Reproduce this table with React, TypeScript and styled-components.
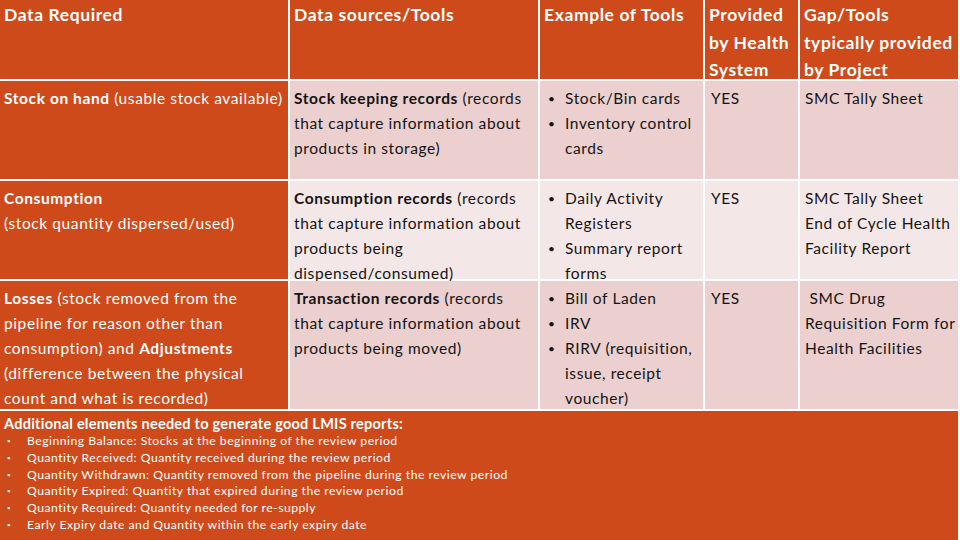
import React from "react";
import styled, { createGlobalStyle } from "styled-components";

const Global = createGlobalStyle`
  html, body { margin: 0; padding: 0; background: #ffffff; }
  body { font-family: Lato, "Open Sans", "Liberation Sans", sans-serif; }
  #root { width: 960px; height: 540px; overflow: hidden; }
`;

const ORANGE = "#CF4A1A";

const Page = styled.div`
  width: 958px;
  display: flex;
  flex-direction: column;
  gap: 2px;
`;

const Table = styled.div`
  display: grid;
  grid-template-columns: 288px 248px 163px 93px 158px;
  grid-template-rows: 79px 98px 98px 128px;
  column-gap: 2px;
  row-gap: 2px;
`;

const HeadCell = styled.div`
  background: ${ORANGE};
  color: #ffffff;
  font-weight: 700;
  font-size: 17.5px;
  letter-spacing: 0.6px;
  line-height: 27.5px;
  padding: 1px 0 0 4px;
`;

type Tone = "a" | "b";

const LabelCell = styled.div`
  background: ${ORANGE};
  color: #ffffff;
  font-size: 15.5px;
  letter-spacing: 0.6px;
  line-height: 25px;
  padding: 5px 2px 0 4px;
  b { font-weight: 700; }
`;

const BodyCell = styled.div<{ $tone: Tone; $pad?: string }>`
  background: ${(p) => (p.$tone === "a" ? "#EBD0CF" : "#F4E7E7")};
  color: #141414;
  font-size: 15.5px;
  letter-spacing: 0.6px;
  line-height: 25px;
  padding: ${(p) => p.$pad ?? "5px 2px 0 4px"};
  b { font-weight: 700; }
`;

const BulletList = styled.ul`
  list-style: none;
  margin: 0;
  padding: 0;
`;

const BulletItem = styled.li`
  position: relative;
  padding-left: 17px;
  &::before {
    content: "•";
    position: absolute;
    left: 0;
    top: 0;
    font-size: 12px;
  }
`;

const Footer = styled.div`
  background: ${ORANGE};
  color: #ffffff;
  height: 129px;
  padding: 3px 5px 0 4px;
  box-sizing: border-box;
`;

const FooterTitle = styled.div`
  font-weight: 700;
  font-size: 14.5px;
  letter-spacing: 0.25px;
  line-height: 19px;
`;

const FooterList = styled.ul`
  list-style: none;
  margin: 0;
  padding: 0;
`;

const FooterItem = styled.li`
  position: relative;
  font-size: 12.2px;
  letter-spacing: 0.5px;
  line-height: 16.8px;
  padding-left: 23px;
  &::before {
    content: "▪";
    position: absolute;
    left: 3px;
    top: 0;
    font-size: 8px;
  }
`;

const Bullets: React.FC<{ items: string[] }> = ({ items }) => (
  <BulletList>
    {items.map((t) => (
      <BulletItem key={t}>{t}</BulletItem>
    ))}
  </BulletList>
);

export default function App() {
  return (
    <>
      <Global />
      <Page>
        <Table>
          <HeadCell>Data Required</HeadCell>
          <HeadCell>Data sources/Tools</HeadCell>
          <HeadCell>Example of Tools</HeadCell>
          <HeadCell>Provided by Health System</HeadCell>
          <HeadCell>Gap/Tools typically provided by Project</HeadCell>

          <LabelCell>
            <b>Stock on hand</b> (usable stock available)
          </LabelCell>
          <BodyCell $tone="a">
            <b>Stock keeping records</b> (records that capture information about products in storage)
          </BodyCell>
          <BodyCell $tone="a" $pad="5px 2px 0 8px">
            <Bullets items={["Stock/Bin cards", "Inventory control cards"]} />
          </BodyCell>
          <BodyCell $tone="a" $pad="5px 2px 0 6px">YES</BodyCell>
          <BodyCell $tone="a" $pad="5px 0 0 5px">SMC Tally Sheet</BodyCell>

          <LabelCell>
            <b>Consumption</b>
            <br />
            (stock quantity dispersed/used)
          </LabelCell>
          <BodyCell $tone="b">
            <b>Consumption records</b> (records that capture information about products being dispensed/consumed)
          </BodyCell>
          <BodyCell $tone="b" $pad="5px 2px 0 8px">
            <Bullets items={["Daily Activity Registers", "Summary report forms"]} />
          </BodyCell>
          <BodyCell $tone="b" $pad="5px 2px 0 6px">YES</BodyCell>
          <BodyCell $tone="b" $pad="5px 0 0 5px">
            SMC Tally Sheet
            <br />
            End of Cycle Health Facility Report
          </BodyCell>

          <LabelCell>
            <b>Losses</b> (stock removed from the pipeline for reason other than consumption) and{" "}
            <b>Adjustments</b> (difference between the physical count and what is recorded)
          </LabelCell>
          <BodyCell $tone="a">
            <b>Transaction records</b> (records that capture information about products being moved)
          </BodyCell>
          <BodyCell $tone="a" $pad="5px 2px 0 8px">
            <Bullets items={["Bill of Laden", "IRV", "RIRV (requisition, issue, receipt voucher)"]} />
          </BodyCell>
          <BodyCell $tone="a" $pad="5px 2px 0 6px">YES</BodyCell>
          <BodyCell $tone="a" $pad="5px 0 0 5px">&nbsp;SMC Drug Requisition Form for Health Facilities</BodyCell>
        </Table>
        <Footer>
          <FooterTitle>Additional elements needed to generate good LMIS reports:</FooterTitle>
          <FooterList>
            <FooterItem>Beginning Balance: Stocks at the beginning of the review period</FooterItem>
            <FooterItem>Quantity Received: Quantity received during the review period</FooterItem>
            <FooterItem>Quantity Withdrawn: Quantity removed from the pipeline during the review period</FooterItem>
            <FooterItem>Quantity Expired: Quantity that expired during the review period</FooterItem>
            <FooterItem>Quantity Required: Quantity needed for re-supply</FooterItem>
            <FooterItem>Early Expiry date and Quantity within the early expiry date</FooterItem>
          </FooterList>
        </Footer>
      </Page>
    </>
  );
}
